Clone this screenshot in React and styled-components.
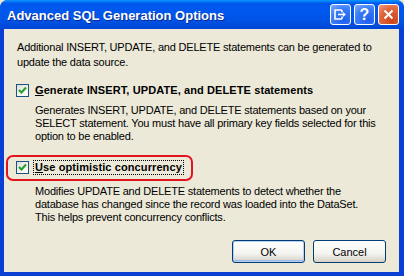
import styled, { createGlobalStyle } from "styled-components";

const Global = createGlobalStyle`
  html, body {
    margin: 0;
    padding: 0;
    background: #ece9d8;
  }
`;

const Window = styled.div`
  width: 404px;
  height: 276px;
  display: flex;
  flex-direction: column;
  background: #0a3fd6;
  border-radius: 8px 8px 0 0;
  overflow: hidden;
  box-sizing: border-box;
`;

const TitleBar = styled.div`
  height: 29px;
  flex: none;
  display: flex;
  align-items: center;
  justify-content: space-between;
  padding: 0 5px 0 7px;
  background: linear-gradient(
    to bottom,
    #0997ff 0%,
    #0058ee 12%,
    #0058ee 40%,
    #0053e6 70%,
    #0046d5 100%
  );
`;

const Title = styled.div`
  color: #fff;
  font-family: "Liberation Sans", Arial, sans-serif;
  font-weight: bold;
  font-size: 13px;
  text-shadow: 1px 1px 0 #0a2a8c;
  margin-top: 1px;
`;

const Controls = styled.div`
  display: flex;
  gap: 3px;
`;

const CtrlButton = styled.div`
  width: 21px;
  height: 21px;
  box-sizing: border-box;
  border: 1px solid #fff;
  border-radius: 3px;
  display: flex;
  align-items: center;
  justify-content: center;
  background: ${(p) =>
    p.$close
      ? "radial-gradient(circle at 70% 80%, #cc4419 0%, #e0673f 60%, #f09a7c 100%)"
      : "radial-gradient(circle at 70% 80%, #1f5ff0 0%, #3c7ef6 60%, #84b0ff 100%)"};
`;

const Body = styled.div`
  flex: 1;
  margin: 0 5px 4px 4px;
  background: #ece9d8;
  display: flex;
  flex-direction: column;
  padding: 11px 13px 9px 12px;
  font-family: "Liberation Sans", Tahoma, sans-serif;
  font-size: 11px;
  letter-spacing: -0.2px;
  color: #000;
  white-space: nowrap;
`;

const Intro = styled.p`
  margin: 0 0 0 1px;
  line-height: 15px;
`;

const Option = styled.div`
  display: flex;
  flex-direction: column;
  margin-top: ${(p) => p.$top}px;
`;

const CheckRow = styled.label`
  position: relative;
  display: flex;
  align-items: center;
  gap: 4px;
  height: 16px;
  font-weight: bold;
  letter-spacing: 0.1px;
  align-self: flex-start;
`;

const Box = styled.span`
  width: 13px;
  height: 13px;
  box-sizing: border-box;
  border: 1px solid #1c5180;
  background: linear-gradient(135deg, #dcdcd7 0%, #f5f5f1 60%, #fff 100%);
  display: flex;
  align-items: center;
  justify-content: center;
`;

const Label = styled.span`
  padding: 0 1px;
  border: 1px dotted ${(p) => (p.$focus ? "#000" : "transparent")};
  line-height: 13px;
`;

const Key = styled.span`
  text-decoration: underline;
`;

const Highlight = styled.span`
  position: absolute;
  left: -10px;
  right: -9px;
  top: -4px;
  bottom: -6px;
  border: 2px solid #e3141c;
  border-radius: 7px;
  pointer-events: none;
`;

const Desc = styled.p`
  margin: ${(p) => p.$top}px 0 0 19px;
  line-height: 13px;
`;

const ButtonRow = styled.div`
  margin-top: auto;
  display: flex;
  justify-content: flex-end;
  gap: 8px;
`;

const Button = styled.button`
  width: 73px;
  height: 23px;
  box-sizing: border-box;
  border: 1px solid #003c74;
  border-radius: 3px;
  background: linear-gradient(to bottom, #fff 0%, #f4f4f0 60%, #d6d0c5 100%);
  font-family: "Liberation Sans", Tahoma, sans-serif;
  font-size: 11px;
  color: #000;
  box-shadow: ${(p) => (p.$default ? "inset 0 0 0 1px #b7cff5, inset 0 -1px 0 1px #98b8ea" : "none")};
`;

function Check() {
  return (
    <Box>
      <svg width="9" height="9" viewBox="0 0 9 9">
        <path d="M1 4 L3.5 6.5 L8 1.5" stroke="#21a121" strokeWidth="2" fill="none" />
      </svg>
    </Box>
  );
}

export default function App() {
  return (
    <>
      <Global />
      <Window>
        <TitleBar>
          <Title>Advanced SQL Generation Options</Title>
          <Controls>
            <CtrlButton>
              <svg width="13" height="11" viewBox="0 0 13 11">
                <path d="M8 1 H1 V10 H8" fill="none" stroke="#fff" strokeWidth="1.6" />
                <path d="M8 1 V3.5 M8 7.5 V10" stroke="#fff" strokeWidth="1.6" />
                <path d="M4 5.5 H10" stroke="#fff" strokeWidth="1.6" />
                <path d="M9 3 L12 5.5 L9 8 Z" fill="#fff" />
              </svg>
            </CtrlButton>
            <CtrlButton>
              <svg width="11" height="15" viewBox="0 0 11 15">
                <text x="5.5" y="13" textAnchor="middle" fill="#fff" fontFamily="Liberation Sans, Arial, sans-serif" fontWeight="bold" fontSize="16">?</text>
              </svg>
            </CtrlButton>
            <CtrlButton $close>
              <svg width="11" height="11" viewBox="0 0 11 11">
                <path d="M1.5 1.5 L9.5 9.5 M9.5 1.5 L1.5 9.5" stroke="#fff" strokeWidth="2" />
              </svg>
            </CtrlButton>
          </Controls>
        </TitleBar>
        <Body>
          <Intro>
            Additional INSERT, UPDATE, and DELETE statements can be generated to
            <br />
            update the data source.
          </Intro>
          <Option $top={12}>
            <CheckRow>
              <Check />
              <Label>
                <Key>G</Key>enerate INSERT, UPDATE, and DELETE statements
              </Label>
            </CheckRow>
            <Desc $top={6}>
              Generates INSERT, UPDATE, and DELETE statements based on your
              <br />
              SELECT statement. You must have all primary key fields selected for this
              <br />
              option to be enabled.
            </Desc>
          </Option>
          <Option $top={16}>
            <CheckRow>
              <Check />
              <Label $focus>
                <Key>U</Key>se optimistic concurrency
              </Label>
              <Highlight />
            </CheckRow>
            <Desc $top={10}>
              Modifies UPDATE and DELETE statements to detect whether the
              <br />
              database has changed since the record was loaded into the DataSet.
              <br />
              This helps prevent concurrency conflicts.
            </Desc>
          </Option>
          <ButtonRow>
            <Button $default>OK</Button>
            <Button>Cancel</Button>
          </ButtonRow>
        </Body>
      </Window>
    </>
  );
}
